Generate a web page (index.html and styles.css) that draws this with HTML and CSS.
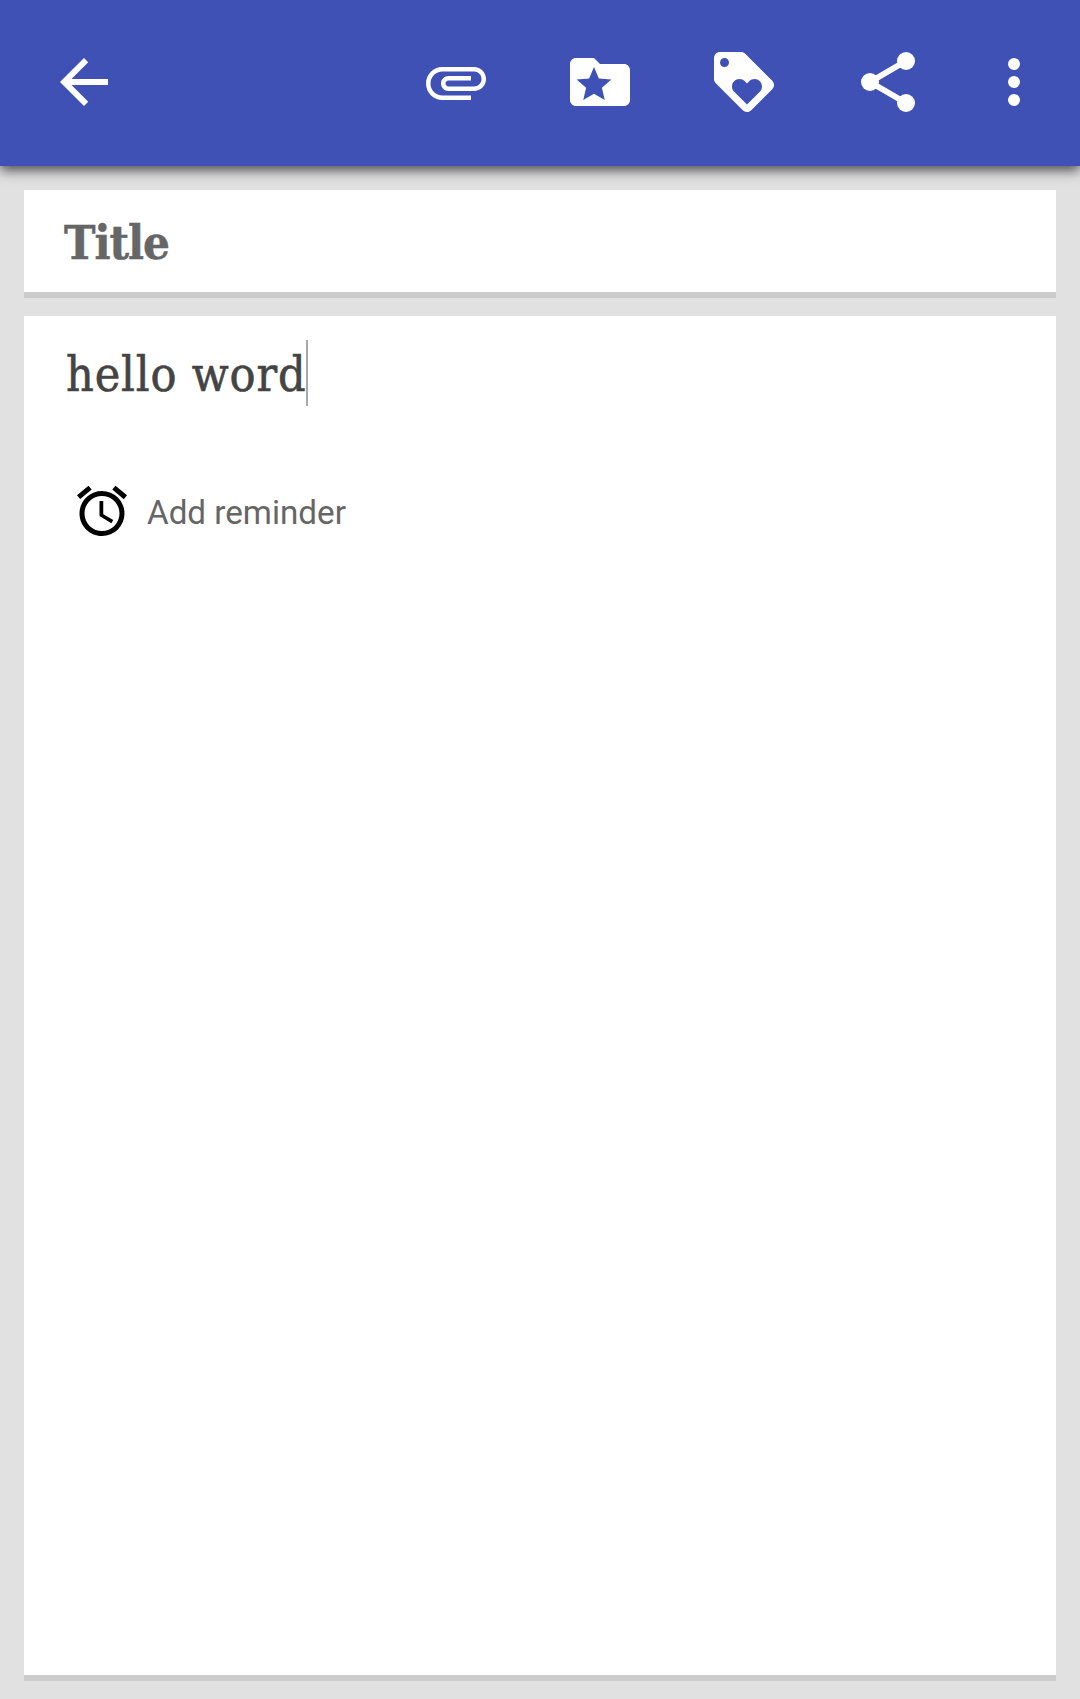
FILE: index.html
```html
<!DOCTYPE html>
<html lang="en">
<head>
<meta charset="utf-8">
<title>Note</title>
<link rel="stylesheet" href="styles.css">
</head>
<body>
<header class="toolbar">
  <svg class="icon back" viewBox="0 0 24 24"><path d="M20 11H7.83l5.59-5.59L12 4l-8 8 8 8 1.41-1.41L7.83 13H20v-2z"/></svg>
  <nav class="actions">
    <svg class="icon" viewBox="0 0 24 24"><path d="M7.5 18C4.46 18 2 15.54 2 12.5S4.46 7 7.5 7H18c2.21 0 4 1.79 4 4s-1.79 4-4 4H9.5C8.12 15 7 13.88 7 12.5S8.12 10 9.5 10H17v1.5H9.5c-.55 0-1 .45-1 1s.45 1 1 1H18c1.38 0 2.5-1.12 2.5-2.5S19.38 8.5 18 8.5H7.5c-2.21 0-4 1.79-4 4s1.79 4 4 4H17V18H7.5z"/></svg>
    <svg class="icon" viewBox="0 0 24 24"><path d="M20 6h-8l-2-2H4c-1.1 0-2 .9-2 2v12c0 1.1.9 2 2 2h16c1.1 0 2-.9 2-2V8c0-1.1-.9-2-2-2zm-6.42 12L10 15.9 6.42 18l.95-4.07-3.16-2.74 4.16-.36L10 7l1.63 3.84 4.16.36-3.16 2.74.95 4.06z"/></svg>
    <svg class="icon" viewBox="0 0 24 24"><path d="M21.41 11.58l-9-9C12.05 2.22 11.55 2 11 2H4c-1.1 0-2 .9-2 2v7c0 .55.22 1.05.59 1.42l9 9c.36.36.86.58 1.41.58.55 0 1.05-.22 1.41-.59l7-7c.37-.36.59-.86.59-1.41 0-.55-.23-1.06-.59-1.42zM5.5 7C4.67 7 4 6.33 4 5.5S4.67 4 5.5 4 7 4.67 7 5.5 6.33 7 5.5 7zm11.77 8.27L13 19.54l-4.27-4.27C8.28 14.81 8 14.19 8 13.5c0-1.38 1.12-2.5 2.5-2.5.69 0 1.32.28 1.77.74l.73.72.73-.73c.45-.45 1.08-.73 1.77-.73 1.38 0 2.5 1.12 2.5 2.5 0 .69-.28 1.32-.73 1.77z"/></svg>
    <svg class="icon" viewBox="0 0 24 24"><path d="M6 12L18 5M6 12l12 7" fill="none" stroke="#fff" stroke-width="2"/><circle cx="18" cy="5" r="3"/><circle cx="6" cy="12" r="3"/><circle cx="18" cy="19" r="3"/></svg>
    <svg class="icon more" viewBox="0 0 24 24"><circle cx="12" cy="6" r="2"/><circle cx="12" cy="12" r="2"/><circle cx="12" cy="18" r="2"/></svg>
  </nav>
</header>
<main class="editor">
  <section class="card title-card"><span class="title">Title</span></section>
  <section class="card note-card">
    <div class="note"><span class="note-text">hello word</span><span class="caret"></span></div>
    <div class="reminder">
      <svg class="alarm" viewBox="0 0 24 24"><path d="M22 5.72l-4.6-3.86-1.29 1.53 4.6 3.86L22 5.72zM7.88 3.39L6.6 1.86 2 5.71l1.29 1.53 4.59-3.85zM12.5 8H11v6l4.75 2.85.75-1.23-4-2.37V8zM12 4c-4.97 0-9 4.03-9 9s4.02 9 9 9a9 9 0 0 0 0-18zm0 16c-3.87 0-7-3.13-7-7s3.13-7 7-7 7 3.13 7 7-3.13 7-7 7z"/></svg>
      <span class="reminder-label">Add reminder</span>
    </div>
  </section>
</main>
</body>
</html>
```
FILE: styles.css
```css
* { box-sizing: border-box; }
body {
  margin: 0;
  height: 1699px;
  display: flex;
  flex-direction: column;
  background: #e1e1e1;
  overflow: hidden;
}
.toolbar {
  height: 166px;
  flex: none;
  display: flex;
  justify-content: space-between;
  padding: 46px 30px 0 48px;
  background: #3f51b5;
  box-shadow: 0 4px 12px rgba(0, 0, 0, .7);
}
.icon { width: 72px; height: 72px; fill: #fff; display: block; }
.actions { display: flex; gap: 72px; }
.more { margin-left: -18px; }
.editor {
  flex: 1;
  display: flex;
  flex-direction: column;
  gap: 18px;
  padding: 24px 24px 18px;
}
.card { background: #fff; border-bottom: 6px solid #cbcbcb; }
.title-card {
  height: 108px;
  display: flex;
  align-items: center;
  padding: 3px 0 0 40px;
}
.title {
  font: bold 47px/64px "Roboto Slab", "DejaVu Serif", serif;
  font-stretch: condensed;
  letter-spacing: -1px;
  color: #666;
  -webkit-text-stroke: .5px #666;
}
.note-card { flex: 1; padding: 24px 42px; }
.note { display: flex; height: 66px; }
.note-text {
  font: 48px/68px "Roboto Slab", "DejaVu Serif", serif;
  font-stretch: condensed;
  letter-spacing: .85px;
  color: #444;
  -webkit-text-stroke: .6px #444;
}
.caret { width: 2px; background: #a8a8a8; }
.reminder { display: flex; align-items: center; margin-top: 75px; margin-left: 6px; gap: 15px; }
.alarm { width: 60px; height: 60px; fill: #000; }
.reminder-label { padding-top: 3px; font: 33.2px/57px Roboto, sans-serif; color: #666; }
```
